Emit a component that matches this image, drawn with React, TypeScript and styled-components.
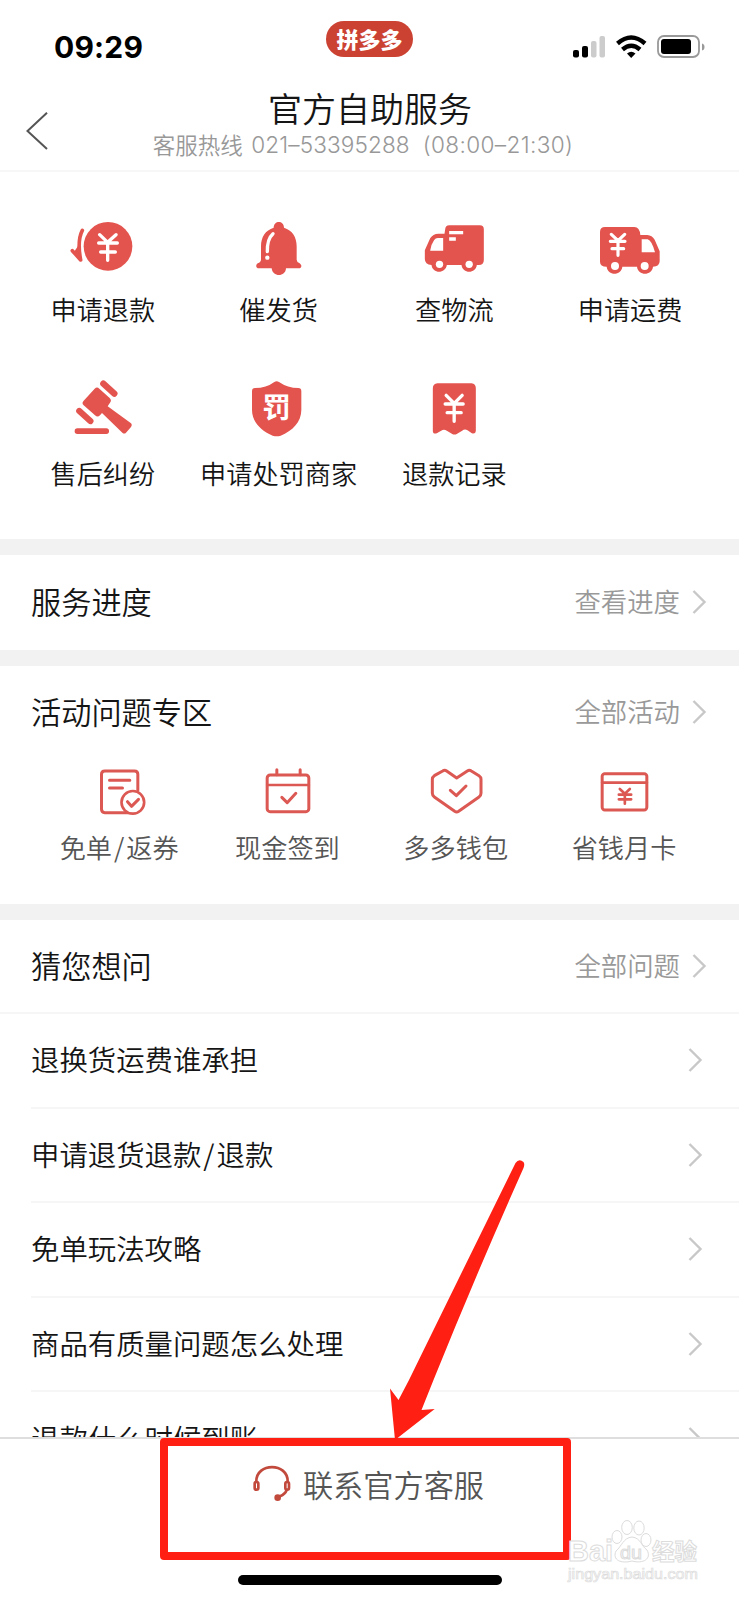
import React from 'react';
import styled, { createGlobalStyle } from 'styled-components';

const RED = '#e4544f';

const GlobalStyle = createGlobalStyle`
  * { box-sizing: border-box; }
  body {
    margin: 0;
    background: #fff;
    font-family: "Noto Sans CJK SC", "Liberation Sans", sans-serif;
    font-weight: 350;
    color: #151515;
  }
  svg { display: block; overflow: visible; }
`;

const Screen = styled.div`
  position: relative;
  width: 739px;
  height: 1600px;
  overflow: hidden;
  display: flex;
  flex-direction: column;
`;

const StatusBar = styled.div`
  height: 88px;
  display: grid;
  grid-template-columns: 1fr auto 1fr;
  padding: 21px 35px 0 35px;
`;

const Time = styled.div`
  font: 700 30px/36px Inter, "Liberation Sans", sans-serif;
  letter-spacing: 0.2px;
  padding: 8px 0 0 19px;
  color: #000;
`;

const AppPill = styled.div`
  width: 87px;
  height: 36px;
  border-radius: 18px;
  background: #cb4132;
  color: #fff;
  font-size: 22px;
  font-weight: 900;
  line-height: 34px;
  text-align: center;
`;

const StatusIcons = styled.div`
  display: flex;
  justify-content: flex-end;
  padding-top: 13px;
`;

const Header = styled.header`
  height: 84px;
  display: grid;
  grid-template-columns: 75px 1fr 75px;
  border-bottom: 2px solid #f7f7f7;
`;

const Back = styled.div`
  padding: 24px 0 0 26px;
`;

const HeaderText = styled.div`
  display: flex;
  flex-direction: column;
  align-items: center;
`;

const Title = styled.h1`
  margin: -2px 0 0;
  font-size: 34px;
  font-weight: 350;
  line-height: 44px;
  padding-left: 1px;
`;

const Hotline = styled.div`
  display: flex;
  font-size: 22.5px;
  line-height: 29px;
  color: #989898;
  white-space: pre;
  margin-left: -5px;
`;

const Digits = styled.span`
  font-family: Inter, "Liberation Sans", "Noto Sans CJK SC", sans-serif;
  font-size: 22.6px;
  font-weight: 300;
  letter-spacing: 0.1px;
  padding-left: 3.5px;
`;

const Hours = styled(Digits)`
  letter-spacing: 0.35px;
  padding: 0 8px 0 13px;
`;

const ServiceGrid = styled.section`
  height: 367px;
  padding: 44px 21px 0 15px;
  display: grid;
  grid-template-columns: repeat(4, 1fr);
  grid-auto-rows: 112.5px;
  row-gap: 51px;
`;

const Cell = styled.div<{ $muted?: boolean }>`
  display: flex;
  flex-direction: column;
  align-items: center;
  gap: 11px;
  font-size: 26.2px;
  line-height: 36px;
  white-space: nowrap;
  color: ${(p) => (p.$muted ? '#555' : '#151515')};
`;

const Slash = styled.span`
  padding: 0 2px;
`;

const Divider = styled.div`
  height: 16px;
  background: #f2f2f2;
`;

const Section = styled.section<{ $height: number }>`
  height: ${(p) => p.$height}px;
`;

const SectionHead = styled.div<{ $line?: boolean }>`
  height: 94px;
  display: flex;
  align-items: center;
  justify-content: space-between;
  padding: 0 33px 0 31px;
  border-bottom: ${(p) => (p.$line ? '2px solid #f6f6f6' : 'none')};
`;

const SectionTitle = styled.h2`
  margin: -2px 0 0;
  font-size: 30.2px;
  font-weight: 350;
`;

const More = styled.div`
  display: flex;
  align-items: center;
  gap: 12px;
  font-size: 26.4px;
  line-height: 36px;
  color: #999;
`;

const MoreText = styled.span`
  margin-top: -2px;
`;

const ActivityHead = styled(SectionHead)`
  height: 92px;
`;

const ActivityGrid = styled.div`
  display: grid;
  grid-template-columns: repeat(4, 168.3px);
  padding: 8px 0 0 35px;
`;

const QuestionList = styled.div`
  padding-left: 31px;
  flex: 1;
  min-height: 0;
  overflow: hidden;
`;

const Question = styled.div`
  height: 94.6px;
  display: flex;
  align-items: center;
  justify-content: space-between;
  padding-right: 37px;
  font-size: 28.4px;
  border-bottom: 2px solid #f6f6f6;
`;

const QuestionText = styled.span`
  margin-top: -3px;
`;

const BottomBar = styled.footer`
  height: 163px;
  flex: none;
  border-top: 2px solid #dedede;
  background: #fff;
  display: flex;
  flex-direction: column;
  align-items: center;
  justify-content: space-between;
  padding: 22px 0 15px;
`;

const Contact = styled.div`
  display: flex;
  align-items: center;
  gap: 12px;
  font-size: 30.2px;
  line-height: 46px;
  color: #555;
  margin-left: -2px;
`;

const HomeIndicator = styled.div`
  width: 264px;
  height: 10px;
  border-radius: 5px;
  background: #000;
`;

const Highlight = styled.div`
  position: absolute;
  left: 160px;
  top: 1438px;
  width: 411px;
  height: 122px;
  border: 8px solid #ff2013;
  border-radius: 4px;
`;

const Arrow = styled.svg`
  position: absolute;
  left: 380px;
  top: 1150px;
`;

const Watermark = styled.svg`
  position: absolute;
  left: 560px;
  top: 1512px;
`;

const Chevron = () => (
  <svg width="14" height="24" viewBox="0 0 14 24" fill="none" stroke="#c8c8c8" strokeWidth="2.4">
    <path d="M1.5 1L12.5 12L1.5 23" />
  </svg>
);

const Label = ({ text }: { text: string }) => {
  const [head, tail] = text.split('/');
  return (
    <span>
      {head}
      {tail && <Slash>/</Slash>}
      {tail}
    </span>
  );
};

const IconBox = ({ x, y, children }: { x: number; y: number; children: React.ReactNode }) => (
  <svg width="72" height="64" viewBox={`${x} ${y} 216 192`} fill={RED} strokeLinecap="round" strokeLinejoin="round">
    {children}
  </svg>
);

const LineIcon = ({ x, children }: { x: number; children: React.ReactNode }) => (
  <svg width="60" height="52" viewBox={`${x} 258 180 156`} fill="none" stroke="#dc5853" strokeWidth="9" strokeLinecap="round" strokeLinejoin="round">
    {children}
  </svg>
);

const services = [
  {
    label: '申请退款',
    icon: (
      <IconBox x={82} y={48}>
        <circle cx="205" cy="139" r="73" />
        <path d="M128 91Q112 122 123 180L98 152" fill="none" stroke={RED} strokeWidth="11" />
        <path d="M119 132L123 182L103 156Z" />
        <path d="M180 104L204 127L229 104M204 127V181M177 129H233M183 156H227" fill="none" stroke="#fff" strokeWidth="10" />
      </IconBox>
    ),
  },
  {
    label: '催发货',
    icon: (
      <IconBox x={609} y={48}>
        <path d="M701 83C701 60 732 60 732 83C757 91 770 111 770 139V179Q770 186 779 190Q789 198 780 205H738C737 232 697 232 695 205H653Q644 198 653 190Q663 187 663 178V139C663 111 676 91 701 83Z" />
        <path d="M699 101Q681 117 682 155" fill="none" stroke="#fff" strokeWidth="10" />
        <circle cx="682" cy="173" r="6.5" fill="#fff" />
      </IconBox>
    ),
  },
  {
    label: '查物流',
    icon: (
      <IconBox x={83.5} y={48}>
        <path d="M177 76H269Q281 76 281 88V180Q281 195 266 195H260C257 222 217 222 214 195H170C166 222 127 222 124 195Q104 194 104 177V151L120 115Q128 101 145 101H163L165 88Q166 76 177 76Z" />
        <path d="M159 114V152H120Q121 136 132 120Q136 114 143 114Z" fill="#fff" />
        <path d="M177 98H219M177 117H197" stroke="#fff" strokeWidth="10" strokeLinecap="butt" />
        <circle cx="148" cy="193" r="11" fill="#fff" />
        <circle cx="237" cy="193" r="11" fill="#fff" />
      </IconBox>
    ),
  },
  {
    label: '申请运费',
    icon: (
      <IconBox x={612} y={48}>
        <path d="M645 81H733Q749 81 751 105H772Q786 106 794 119L809 154V183Q809 200 789 200C786 228 744 228 741 200H697C694 228 653 228 650 200Q630 200 630 185V96Q630 81 645 81Z" />
        <path d="M755 118H773Q785 121 795 157H755Z" fill="#fff" />
        <path d="M664 103L684 122L704 103M684 122V166M661 124H705M666 146H701" fill="none" stroke="#fff" strokeWidth="9.5" />
        <circle cx="675" cy="198" r="12" fill="#fff" />
        <circle cx="764" cy="198" r="12" fill="#fff" />
      </IconBox>
    ),
  },
  {
    label: '售后纠纷',
    icon: (
      <IconBox x={82} y={58}>
        <rect x="105" y="203" width="103" height="17" rx="8" />
        <path d="M165 84Q172 77 179 84L210 112Q217 119 211 126L204 137L273 187Q279 192 274 199L259 216Q254 221 248 216L187 157L181 164Q174 171 166 164L132 134Q125 127 132 120Z" />
        <path d="M191 69L224 99M119 151L152 181" stroke={RED} strokeWidth="19" />
      </IconBox>
    ),
  },
  {
    label: '申请处罚商家',
    icon: (
      <IconBox x={610} y={60}>
        <path d="M704 66Q711 61 718 66Q744 84 776 84Q785 84 785 94V150C785 186 758 213 723 227Q711 231 699 227C665 213 637 186 637 150V94Q637 84 646 84Q680 84 704 66Z" />
        <text x="668" y="175" fill="#fff" fontSize="86" fontWeight="700">罚</text>
      </IconBox>
    ),
  },
  {
    label: '退款记录',
    icon: (
      <IconBox x={113.5} y={58}>
        <path d="M172 68H274Q287 70 287 83V211Q286 221 275 218L262 209Q254 204 246 210L231 219Q223 224 215 219L200 210Q191 204 183 210L170 218Q158 221 158 211V83Q158 70 172 68Z" />
        <path d="M198 104L222 128L246 104M222 128V182M195 130H249M201 156H243" fill="none" stroke="#fff" strokeWidth="10" />
      </IconBox>
    ),
  },
];

const activities = [
  {
    label: '免单/返券',
    icon: (
      <LineIcon x={267.5}>
        <path d="M414 331V283Q414 273 404 273H315Q305 273 305 283V388Q305 398 315 398H390" />
        <path d="M329 301H390M329 324H368" />
        <circle cx="399" cy="367" r="34" fill="#fff" strokeWidth="8" />
        <path d="M383 365L395 379L416 358" />
      </LineIcon>
    ),
  },
  {
    label: '现金签到',
    icon: (
      <LineIcon x={771.5}>
        <rect x="802" y="285" width="125" height="110" rx="9" />
        <path d="M802 315H927" strokeWidth="8" />
        <path d="M831 269V284M901 269V284" />
        <path d="M846 352L862 368L888 340" />
      </LineIcon>
    ),
  },
  {
    label: '多多钱包',
    icon: (
      <LineIcon x={171}>
        <path d="M221 273Q227 269 233 273L263 294L295 273Q301 269 307 273L330 287Q336 291 336 298V340Q336 347 330 351L269 394Q263 398 257 394L196 351Q190 347 190 340V298Q190 291 196 287Z" />
        <path d="M244 331L262 347L291 318" />
      </LineIcon>
    ),
  },
  {
    label: '省钱月卡',
    icon: (
      <LineIcon x={675.5}>
        <rect x="700" y="281" width="134" height="109" rx="8" />
        <path d="M700 308H834" strokeWidth="8" />
        <path d="M753 327L768 341L783 327M768 341V371M750 344H787M750 358H787" strokeWidth="8" />
      </LineIcon>
    ),
  },
];

const questions = ['退换货运费谁承担', '申请退货退款/退款', '免单玩法攻略', '商品有质量问题怎么处理', '退款什么时候到账'];

export default function App() {
  return (
    <Screen>
      <GlobalStyle />
      <StatusBar>
        <Time>09:29</Time>
        <AppPill>拼多多</AppPill>
        <StatusIcons>
          <svg width="132" height="26" viewBox="572 34 132 26">
            <rect x="573" y="50" width="6" height="7.5" rx="2" />
            <rect x="582" y="46" width="6" height="11.5" rx="2" />
            <rect x="591" y="41" width="5.5" height="16.5" rx="2" fill="#ccc" />
            <rect x="599.5" y="36" width="5.5" height="21.5" rx="2" fill="#ccc" />
            <g fill="none" stroke="#000" strokeWidth="4.4">
              <path d="M617.5 43.5Q631.2 31.5 645 43.5" />
              <path d="M622.5 49.5Q631.2 42 640 49.5" />
            </g>
            <path d="M627 53.5Q631.2 50 635.5 53.5L631.2 58Z" />
            <rect x="658" y="36" width="41" height="21" rx="6" fill="none" stroke="#999" strokeWidth="1.8" />
            <rect x="661" y="39" width="30" height="15" rx="3" />
            <path d="M702 43.5V50.5Q704.5 50 704.5 47Q704.5 44 702 43.5Z" fill="#999" />
          </svg>
        </StatusIcons>
      </StatusBar>
      <Header>
        <Back>
          <svg width="22" height="38" viewBox="0 0 22 38" fill="none" stroke="#555" strokeWidth="2">
            <path d="M21 .8L1.5 19L21 37" />
          </svg>
        </Back>
        <HeaderText>
          <Title>官方自助服务</Title>
          <Hotline>
            <span>客服热线 </span>
            <Digits>021–53395288</Digits>
            <Hours>(08:00–21:30)</Hours>
          </Hotline>
        </HeaderText>
      </Header>
      <ServiceGrid>
        {services.map((s) => (
          <Cell key={s.label}>
            {s.icon}
            <Label text={s.label} />
          </Cell>
        ))}
      </ServiceGrid>
      <Divider />
      <Section $height={95}>
        <SectionHead>
          <SectionTitle>服务进度</SectionTitle>
          <More><MoreText>查看进度</MoreText><Chevron /></More>
        </SectionHead>
      </Section>
      <Divider />
      <Section $height={238}>
        <ActivityHead>
          <SectionTitle>活动问题专区</SectionTitle>
          <More><MoreText>全部活动</MoreText><Chevron /></More>
        </ActivityHead>
        <ActivityGrid>
          {activities.map((a) => (
            <Cell key={a.label} $muted>
              {a.icon}
              <Label text={a.label} />
            </Cell>
          ))}
        </ActivityGrid>
      </Section>
      <Divider />
      <SectionHead $line>
        <SectionTitle>猜您想问</SectionTitle>
        <More><MoreText>全部问题</MoreText><Chevron /></More>
      </SectionHead>
      <QuestionList>
        {questions.map((q) => (
          <Question key={q}><QuestionText><Label text={q} /></QuestionText><Chevron /></Question>
        ))}
      </QuestionList>
      <BottomBar>
        <Contact>
          <svg width="38" height="36" viewBox="761 259 114 108" fill="none" stroke="#c24a3d" strokeWidth="8" strokeLinecap="round">
            <path d="M771 305C771 248 865 248 865 305" />
            <rect x="766" y="307" width="11" height="23" rx="5" strokeWidth="8" />
            <rect x="858" y="307" width="11" height="23" rx="5" strokeWidth="8" />
            <path d="M862 331Q858 343 842 350" />
            <circle cx="835" cy="354" r="10" fill="#c24a3d" stroke="none" />
          </svg>
          联系官方客服
        </Contact>
        <HomeIndicator />
      </BottomBar>
      <Highlight />
      <Arrow width="150" height="290" viewBox="380 1150 150 290" fill="#ff2013">
        <path d="M515.5 1163Q519 1158 523.5 1162Q525 1164 523.5 1168Q475 1277 433.5 1380L421.5 1410L434.7 1409L395 1440L390 1388.5L398.5 1400L409 1380Q456 1284 515.5 1163Z" />
      </Arrow>
      <Watermark width="145" height="76" viewBox="560 1512 145 76" fill="#fff" stroke="#dcdcdc" strokeWidth="1" fontFamily="Liberation Sans, sans-serif" fontWeight="700">
        <text x="568" y="1561" fontSize="29" textLength="45" lengthAdjust="spacingAndGlyphs">Bai</text>
        <ellipse cx="617" cy="1537" rx="5" ry="6.5" />
        <ellipse cx="627" cy="1527.5" rx="5.3" ry="7" />
        <ellipse cx="639" cy="1528" rx="5.2" ry="7" />
        <ellipse cx="646" cy="1540" rx="5" ry="6.5" />
        <path d="M632 1537C641 1538 641 1546 647 1550C652 1559 643 1564 632 1561C621 1564 612 1560 616 1551C622 1546 623 1538 632 1537Z" />
        <text x="620" y="1559" fontSize="18" fontWeight="400" textLength="22" lengthAdjust="spacingAndGlyphs">du</text>
        <text x="652" y="1560" fontSize="23" fontFamily="Noto Sans CJK SC, sans-serif" textLength="45" lengthAdjust="spacingAndGlyphs">经验</text>
        <text x="568" y="1579" fontSize="15" fontWeight="400" strokeWidth=".7" textLength="130" lengthAdjust="spacingAndGlyphs">jingyan.baidu.com</text>
      </Watermark>
    </Screen>
  );
}
